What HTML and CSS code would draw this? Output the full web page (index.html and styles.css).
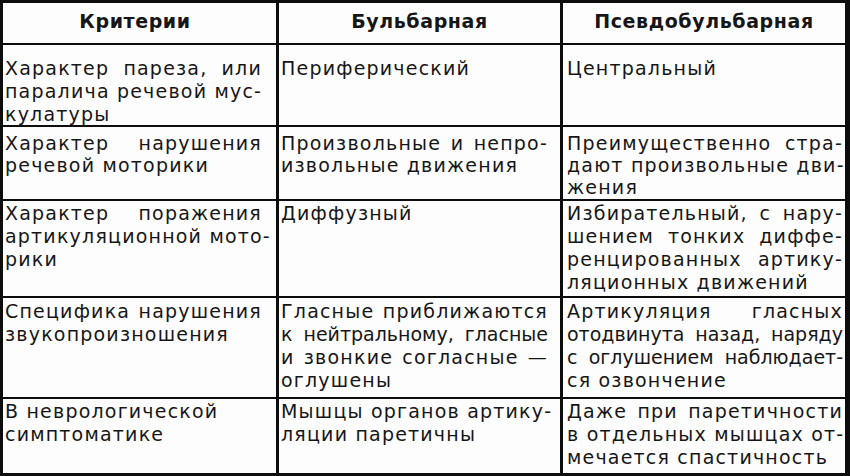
FILE: index.html
```html
<!DOCTYPE html>
<html lang="ru">
<head>
<meta charset="utf-8">
<title>Критерии</title>
<link rel="stylesheet" href="styles.css">
</head>
<body>
<div class="table">
  <div class="cell head c1">Критерии</div>
  <div class="cell head c2">Бульбарная</div>
  <div class="cell head c3">Псевдобульбарная</div>

  <div class="cell c1 r1"><span class="ln j">Характер пареза, или</span><span class="ln j">паралича речевой мус-</span><span class="ln">кулатуры</span></div>
  <div class="cell c2 r1"><span class="ln">Периферический</span></div>
  <div class="cell c3 r1"><span class="ln">Центральный</span></div>

  <div class="cell c1 r2"><span class="ln j">Характер нарушения</span><span class="ln">речевой моторики</span></div>
  <div class="cell c2 r2"><span class="ln j">Произвольные и непро-</span><span class="ln">извольные движения</span></div>
  <div class="cell c3 r2"><span class="ln j">Преимущественно стра-</span><span class="ln j">дают произвольные дви-</span><span class="ln">жения</span></div>

  <div class="cell c1 r3"><span class="ln j">Характер поражения</span><span class="ln j">артикуляционной мото-</span><span class="ln">рики</span></div>
  <div class="cell c2 r3"><span class="ln">Диффузный</span></div>
  <div class="cell c3 r3"><span class="ln j">Избирательный, с нару-</span><span class="ln j">шением тонких диффе-</span><span class="ln j">ренцированных артику-</span><span class="ln">ляционных движений</span></div>

  <div class="cell c1 r4"><span class="ln j">Специфика нарушения</span><span class="ln">звукопроизношения</span></div>
  <div class="cell c2 r4"><span class="ln j">Гласные приближаются</span><span class="ln j tight">к нейтральному, гласные</span><span class="ln j">и звонкие согласные —</span><span class="ln">оглушены</span></div>
  <div class="cell c3 r4"><span class="ln j">Артикуляция гласных</span><span class="ln j tight">отодвинута назад, наряду</span><span class="ln j tight">с оглушением наблюдает-</span><span class="ln">ся озвончение</span></div>

  <div class="cell c1 r5"><span class="ln">В неврологической</span><span class="ln">симптоматике</span></div>
  <div class="cell c2 r5"><span class="ln j">Мышцы органов артику-</span><span class="ln">ляции паретичны</span></div>
  <div class="cell c3 r5"><span class="ln j">Даже при паретичности</span><span class="ln j">в отдельных мышцах от-</span><span class="ln">мечается спастичность</span></div>
</div>
</body>
</html>
```
FILE: styles.css
```css
html, body {
  margin: 0;
  padding: 0;
  background: #fff;
}

.table {
  width: 850px;
  height: 476px;
  box-sizing: border-box;
  display: grid;
  grid-template-columns: 273px 281px 282px;
  grid-template-rows: 40px 80px 72px 95px 99px 74px;
  column-gap: 3px;
  row-gap: 2px;
  padding: 3px 5px 3px 3px;
  background: #0d0d0d;
  font-family: "DejaVu Sans", sans-serif;
  font-size: 19px;
  line-height: 23px;
  letter-spacing: 1.2px;
  color: #161616;
}

.cell {
  background: #fdfdfd;
  overflow: hidden;
  box-sizing: border-box;
}

.c1 { padding-left: 2px; padding-right: 14px; }
.c2 { padding-left: 2px; padding-right: 12px; }
.c3 { padding-left: 4px; padding-right: 2px; }

.head {
  display: flex;
  align-items: center;
  justify-content: center;
  font-weight: bold;
  letter-spacing: 0.6px;
  padding: 0 0 4px 0;
}

.head.c1 { padding-right: 9px; }

.r1 { padding-top: 12px; }
.r2 { padding-top: 5px; line-height: 22px; }
.r3 { padding-top: 1px; }
.r4 { padding-top: 2px; }
.r5 { padding-top: 1px; }

.ln {
  display: block;
  white-space: nowrap;
}

.j {
  text-align: justify;
  text-align-last: justify;
}

.tight {
  letter-spacing: 0;
}
```
